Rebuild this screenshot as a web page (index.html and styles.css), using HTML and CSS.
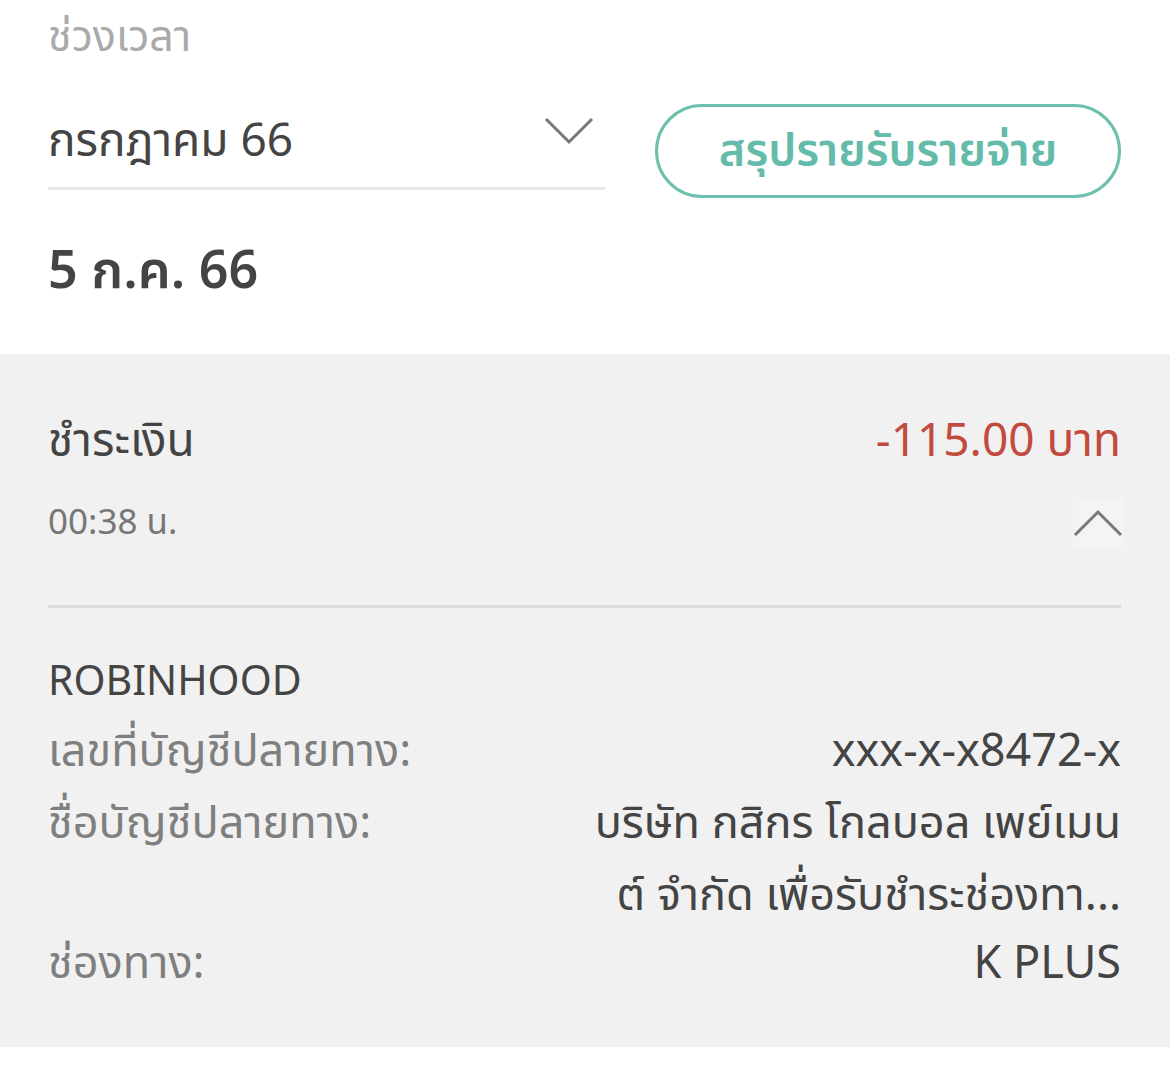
FILE: index.html
```html
<!DOCTYPE html>
<html lang="th">
<head>
<meta charset="utf-8">
<link rel="stylesheet" href="styles.css">
</head>
<body>
<div class="page">
  <section class="top">
    <div class="label">ช่วงเวลา</div>
    <div class="filter-row">
      <div class="select">
        <span class="select-text">กรกฎาคม 66</span>
        <svg class="chev-down" width="50" height="30" viewBox="0 0 50 30"><polyline points="2,3 25,26 48,3" fill="none" stroke="#777" stroke-width="3"/></svg>
      </div>
      <button class="summary-btn">สรุปรายรับรายจ่าย</button>
    </div>
    <div class="date">5 ก.ค. 66</div>
  </section>
  <section class="card">
    <div class="row head">
      <span class="title">ชำระเงิน</span>
      <span class="amount">-115.00 บาท</span>
    </div>
    <div class="row time-row">
      <span class="time">00:38 น.</span>
      <span class="chev-up-box"><svg width="50" height="30" viewBox="0 0 50 30"><polyline points="2,27 25,4 48,27" fill="none" stroke="#777" stroke-width="3"/></svg></span>
    </div>
    <div class="divider"></div>
    <div class="merchant">ROBINHOOD</div>
    <div class="detail">
      <span class="key">เลขที่บัญชีปลายทาง:</span>
      <span class="val">xxx-x-x8472-x</span>
    </div>
    <div class="detail">
      <span class="key">ชื่อบัญชีปลายทาง:</span>
      <span class="val multi"><span>บริษัท กสิกร โกลบอล เพย์เมน</span><span>ต์ จำกัด เพื่อรับชำระช่องทา...</span></span>
    </div>
    <div class="detail last">
      <span class="key">ช่องทาง:</span>
      <span class="val">K PLUS</span>
    </div>
  </section>
</div>
</body>
</html>
```
FILE: styles.css
```css
* { box-sizing: border-box; }
html, body { margin: 0; padding: 0; background: #fff; }
body { font-family: "Noto Sans Thai", "Noto Sans", "Liberation Sans", sans-serif; color: #444; }
.page { width: 1170px; }
.top { padding: 16px 49px 0 48px; height: 354px; }
.label { font-size: 43px; color: #aaa; line-height: 44px; height: 44px; }
.filter-row { display: flex; align-items: flex-start; gap: 49px; margin-top: 44px; }
.select { width: 558px; height: 86px; border-bottom: 3px solid #e8e8e8; display: flex; justify-content: space-between; align-items: flex-start; }
.select-text { font-size: 46px; line-height: 48px; padding-top: 14px; color: #444; }
.chev-down { margin-top: 12px; margin-right: 12px; }
.summary-btn { width: 466px; height: 94px; border: 3px solid #6dbfae; border-radius: 47px; background: #fff; color: #65bba9; font-family: inherit; font-size: 45px; font-weight: 600; padding: 0; }
.date { font-size: 52px; font-weight: 600; line-height: 56px; margin-top: 46px; color: #444; }
.card { background: #f1f1f1; height: 693px; padding: 0 49px 0 48px; }
.row { display: flex; justify-content: space-between; align-items: center; }
.head { padding-top: 66px; height: 110px; }
.title { font-size: 46px; line-height: 48px; color: #444; }
.amount { font-size: 46px; line-height: 48px; color: #c24a3e; }
.time-row { height: 118px; }
.time { font-size: 35px; color: #777; }
.chev-up-box { width: 50px; height: 50px; margin-right: -2px; background: #f4f4f4; display: flex; align-items: center; justify-content: center; }
.divider { height: 3px; background: #dcdcdc; margin-top: 23px; }
.merchant { font-size: 41px; line-height: 48px; margin-top: 50px; margin-bottom: 10px; color: #444; }
.detail { display: flex; justify-content: space-between; align-items: flex-start; font-size: 45px; line-height: 72px; }
.detail.last { margin-top: -4px; }
.key { color: #7f7f7f; }
.val { color: #444; text-align: right; }
.multi { display: flex; flex-direction: column; align-items: flex-end; }
```
